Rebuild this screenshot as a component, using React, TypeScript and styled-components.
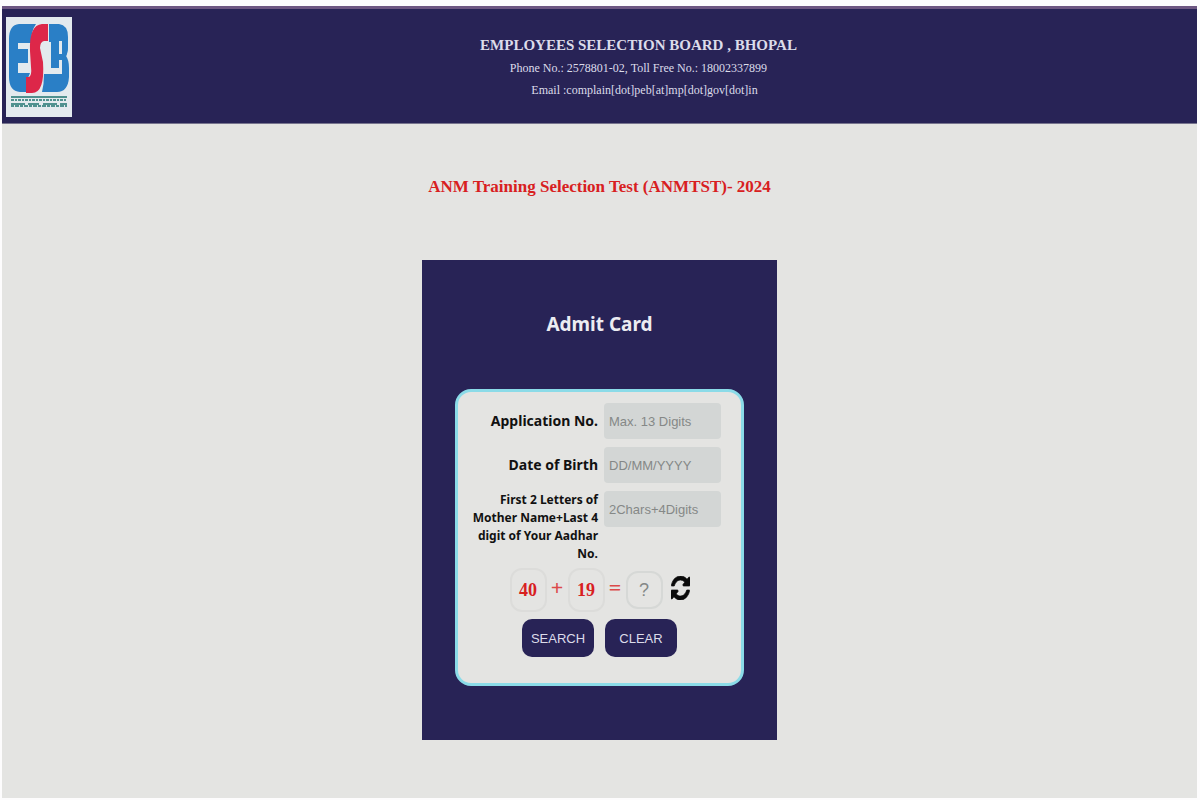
import React, { useState } from 'react';
import styled, { createGlobalStyle } from 'styled-components';

const navy = '#282356';
const paper = '#e4e4e2';
const serif = '"Liberation Serif", "Times New Roman", serif';
const sans = '"Liberation Sans", Arial, sans-serif';
const humanist = '"Noto Sans", Tahoma, sans-serif';

const GlobalStyle = createGlobalStyle`
  * { box-sizing: border-box; }
  body { margin: 0; background: #fdfcfd; font-family: ${serif}; }
`;

const Page = styled.div`
  display: flex;
  flex-direction: column;
  min-height: calc(100vh - 8px);
  margin: 6px 3px 2px 2px;
  background: ${paper};
`;

const Header = styled.header`
  display: flex;
  align-items: flex-start;
  gap: 8px;
  min-height: 118px;
  padding: 8px 0 6px 4px;
  background: ${navy};
  border-top: 3px solid #6d5682;
  border-bottom: 1px solid #77748e;
`;

const Logo = styled.svg`
  flex: none;
  width: 66px;
  height: 100px;
`;

const HeaderText = styled.div`
  flex: 1;
  padding-top: 16px;
  text-align: center;
  color: #dcdcea;
`;

const BoardName = styled.h1`
  margin: 0;
  font-size: 15px;
  line-height: 24px;
  font-weight: bold;
`;

const Contact = styled.p<{ $indent?: boolean }>`
  margin: 0;
  padding-left: ${(p) => (p.$indent ? '12px' : '0')};
  font-size: 12px;
  line-height: 22px;
`;

const Main = styled.main`
  display: flex;
  flex-direction: column;
  align-items: center;
  padding-top: 50px;
`;

const ExamTitle = styled.h2`
  margin: 0 0 60px;
  font-size: 17px;
  line-height: 26px;
  font-weight: bold;
  color: #d8201f;
`;

const Card = styled.section`
  width: 100%;
  max-width: 355px;
  padding: 48px 33px 54px;
  background: ${navy};
`;

const CardTitle = styled.h3`
  margin: 0 0 48px;
  font: bold 19px/33px ${humanist};
  text-align: center;
  color: #ececf2;
`;

const Form = styled.form`
  padding: 11px 20px 26px 12px;
  background: ${paper};
  border: 3px solid #8bdbe8;
  border-radius: 16px;
`;

const Field = styled.div<{ $tall?: boolean }>`
  display: grid;
  grid-template-columns: 1fr 117px;
  gap: 6px;
  align-items: ${(p) => (p.$tall ? 'start' : 'center')};
  margin-bottom: ${(p) => (p.$tall ? '5px' : '8px')};
`;

const Label = styled.label<{ $small?: boolean }>`
  text-align: right;
  color: #111;
  font-family: ${humanist};
  font-weight: bold;
  font-size: ${(p) => (p.$small ? '12px' : '14px')};
  line-height: 18px;
`;

const TextInput = styled.input`
  width: 100%;
  height: 36px;
  padding: 0 5px;
  border: 0;
  border-radius: 4px;
  background: #d3d6d5;
  font: 13px ${sans};
  color: #333;
  &::placeholder { color: #858887; opacity: 1; }
`;

const Captcha = styled.div`
  display: flex;
  align-items: center;
  justify-content: center;
  gap: 4px;
  padding-left: 8px;
`;

const Operand = styled.span`
  width: 37px;
  border: 2px solid #dcdcda;
  border-radius: 12px;
  font-size: 18px;
  line-height: 40px;
  font-weight: bold;
  text-align: center;
  color: #d8201f;
`;

const Operator = styled.span`
  width: 13px;
  font-size: 22px;
  line-height: 36px;
  padding-bottom: 4px;
  font-weight: bold;
  text-align: center;
  color: #dc4a4a;
`;

const Answer = styled.input`
  width: 37px;
  height: 38px;
  padding: 0;
  border: 2px solid #d6d8d6;
  border-radius: 12px;
  background: transparent;
  font: 18px ${sans};
  text-align: center;
  &::placeholder { color: #858887; opacity: 1; }
`;

const Refresh = styled.button`
  display: flex;
  padding: 0 0 4px 4px;
  border: 0;
  background: none;
  color: #0a0a0a;
`;

const Actions = styled.div`
  display: flex;
  justify-content: center;
  gap: 11px;
  margin-top: 7px;
  padding-left: 8px;
`;

const ActionButton = styled.button`
  width: 72px;
  height: 38px;
  padding: 0;
  border: 0;
  border-radius: 10px;
  background: ${navy};
  color: #dcdcea;
  font: 13px ${sans};
`;

function BoardLogo() {
  return (
    <Logo viewBox="0 0 66 100" role="img" aria-label="ESB">
      <rect width="66" height="100" fill="#e3eaee" />
      <path fill="#2a7fc6" d="M13 7H30Q25 14 25 26H12V32H22V46H12V56H24L20 66V75H14Q3 74 3 60V22Q3 8 13 7Z" />
      <path fill="#2a7fc6" d="M43 7H53Q62 8 62 20V30Q62 36 60 39Q63 43 63 51V60Q62 75 51 75H36Q38 67 38 57H56V43H53V51H45V25H43Z" />
      <path fill="#2a7fc6" d="M45 20H62V30L60 40H53V24H45Z" />
      <path fill="#e3eaee" d="M53 24H56V37H53Z" />
      <path fill="#dd2749" d="M42 7V24H38Q34 25 34 31L37 45Q39 76 26 76H20V60H23Q26 58 25 50L24 34Q23 8 36 7Z" />
      <g stroke="#4f918f" strokeWidth="2" fill="none">
        <path d="M5 80H61" />
        <path d="M5 83H61" strokeDasharray="3 1 2 1" />
        <path d="M5 87H61" strokeDasharray="14 3 11 4" />
        <path d="M5 89H61" strokeDasharray="3 1 4 1" />
      </g>
    </Logo>
  );
}

function RefreshIcon() {
  return (
    <svg width="19" height="24" viewBox="0 128 1536 1536" preserveAspectRatio="none" fill="currentColor" aria-hidden="true">
      <path
        transform="translate(0 128)"
        stroke="currentColor"
        strokeWidth="50"
        d="M1511 928q0 5-1 7-64 268-268 434.500t-478 166.500q-146 0-282.500-55t-243.500-157l-129 129q-19 19-45 19t-45-19-19-45v-448q0-26 19-45t45-19h448q26 0 45 19t19 45-19 45l-137 137q71 66 161 102t187 36q134 0 250-65t186-179q11-17 53-117 8-23 30-23h192q13 0 22.500 9.500t9.500 22.500zM1536 128v448q0 26-19 45t-45 19h-448q-26 0-45-19t-19-45 19-45l138-138q-148-137-349-137-134 0-250 65t-186 179q-11 17-53 117-8 23-30 23h-199q-13 0-22.500-9.500t-9.500-22.500v-7q65-268 270-434.500t480-166.500q146 0 284 55.500t245 156.500l130-129q19-19 45-19t45 19 19 45z"
      />
    </svg>
  );
}

export default function App() {
  const [answer, setAnswer] = useState('');
  return (
    <>
      <GlobalStyle />
      <Page>
        <Header>
          <BoardLogo />
          <HeaderText>
            <BoardName>EMPLOYEES SELECTION BOARD , BHOPAL</BoardName>
            <Contact>Phone No.: 2578801-02, Toll Free No.: 18002337899</Contact>
            <Contact $indent>Email :complain[dot]peb[at]mp[dot]gov[dot]in</Contact>
          </HeaderText>
        </Header>
        <Main>
          <ExamTitle>ANM Training Selection Test (ANMTST)- 2024</ExamTitle>
          <Card>
            <CardTitle>Admit Card</CardTitle>
            <Form onSubmit={(e) => e.preventDefault()} onReset={() => setAnswer('')}>
              <Field>
                <Label htmlFor="application">Application No.</Label>
                <TextInput id="application" maxLength={13} placeholder="Max. 13 Digits" />
              </Field>
              <Field>
                <Label htmlFor="birth">Date of Birth</Label>
                <TextInput id="birth" placeholder="DD/MM/YYYY" />
              </Field>
              <Field $tall>
                <Label $small htmlFor="identity">
                  First 2 Letters of Mother Name+Last 4 digit of Your Aadhar No.
                </Label>
                <TextInput id="identity" maxLength={6} placeholder="2Chars+4Digits" />
              </Field>
              <Captcha>
                <Operand>40</Operand>
                <Operator>+</Operator>
                <Operand>19</Operand>
                <Operator>=</Operator>
                <Answer
                  aria-label="Answer"
                  placeholder="?"
                  value={answer}
                  onChange={(e) => setAnswer(e.target.value)}
                />
                <Refresh type="button" aria-label="Refresh">
                  <RefreshIcon />
                </Refresh>
              </Captcha>
              <Actions>
                <ActionButton type="submit">SEARCH</ActionButton>
                <ActionButton type="reset">CLEAR</ActionButton>
              </Actions>
            </Form>
          </Card>
        </Main>
      </Page>
    </>
  );
}
